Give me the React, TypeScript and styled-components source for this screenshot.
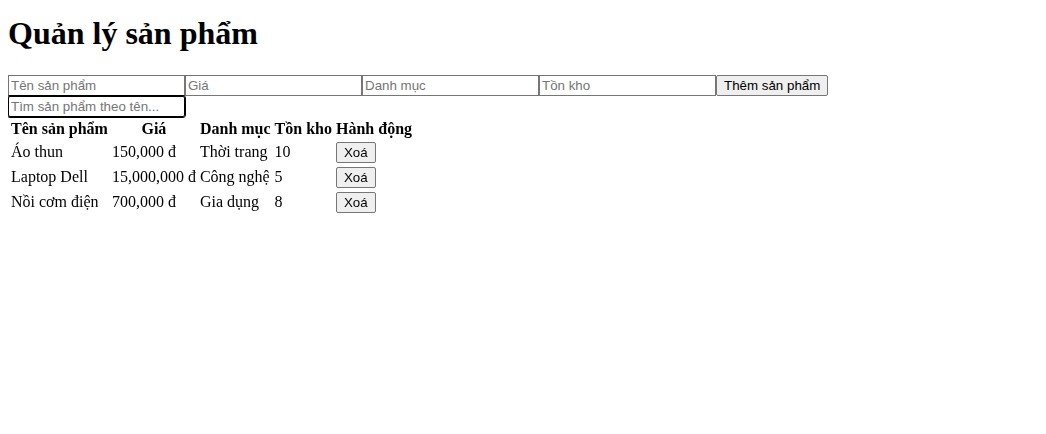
import React, { useState } from 'react';
import styled, { createGlobalStyle } from 'styled-components';

const GlobalStyle = createGlobalStyle`
  body {
    margin: 8px;
    font-family: "Liberation Serif", "Times New Roman", serif;
    font-size: 16px;
    background: #fff;
    color: #000;
  }
`;

const products = [
  { id: 1, name: 'Áo thun', price: '150,000 đ', category: 'Thời trang', stock: 10 },
  { id: 2, name: 'Laptop Dell', price: '15,000,000 đ', category: 'Công nghệ', stock: 5 },
  { id: 3, name: 'Nồi cơm điện', price: '700,000 đ', category: 'Gia dụng', stock: 8 },
];

const App = () => {
  const [search, setSearch] = useState('');
  const list = products.filter((p) => p.name.toLowerCase().includes(search.toLowerCase()));

  return (
    <div>
      <GlobalStyle />
      <Heading>Quản lý sản phẩm</Heading>
      <Form>
        <Field placeholder="Tên sản phẩm" />
        <Field placeholder="Giá" />
        <Field placeholder="Danh mục" />
        <Field placeholder="Tồn kho" />
        <Button>Thêm sản phẩm</Button>
      </Form>
      <Search
        placeholder="Tìm sản phẩm theo tên..."
        value={search}
        onChange={(e) => setSearch(e.target.value)}
        autoFocus
      />
      <Table>
        <thead>
          <tr>
            <Th>Tên sản phẩm</Th>
            <Th>Giá</Th>
            <Th>Danh mục</Th>
            <Th>Tồn kho</Th>
            <Th>Hành động</Th>
          </tr>
        </thead>
        <tbody>
          {list.map((p) => (
            <tr key={p.id}>
              <Td>{p.name}</Td>
              <Td>{p.price}</Td>
              <Td>{p.category}</Td>
              <Td>{p.stock}</Td>
              <Td>
                <Button>Xoá</Button>
              </Td>
            </tr>
          ))}
        </tbody>
      </Table>
    </div>
  );
};

export default App;

const Heading = styled.h1`
  font-size: 32px;
  font-weight: bold;
  margin: 7px 0 23px;
  line-height: 1.15;
`;

const Form = styled.div`
  display: flex;
  height: 21px;
`;

const Field = styled.input`
  box-sizing: border-box;
  width: 177px;
  height: 21px;
  margin: 0;
  padding: 1px 2px;
  border: 1px solid #767676;
  border-radius: 0;
  font-family: "Liberation Sans", Arial, sans-serif;
  font-size: 13.33px;
  color: #000;
  &::placeholder {
    color: #757575;
  }
`;

const Search = styled(Field)`
  display: block;
  border-radius: 2px;
  outline: 1px solid #000;
  border-color: #000;
`;

const Button = styled.button`
  box-sizing: border-box;
  height: 21px;
  margin: 0;
  padding: 1px 7px;
  border: 1px solid #767676;
  border-radius: 2px;
  background: #efefef;
  font-family: "Liberation Sans", Arial, sans-serif;
  font-size: 13.33px;
  color: #000;
`;

const Table = styled.table`
  border-spacing: 2px;
  margin-top: 0;
`;

const Th = styled.th`
  padding: 1px;
  font-weight: bold;
  text-align: center;
`;

const Td = styled.td`
  padding: 1px;
  text-align: left;
`;
